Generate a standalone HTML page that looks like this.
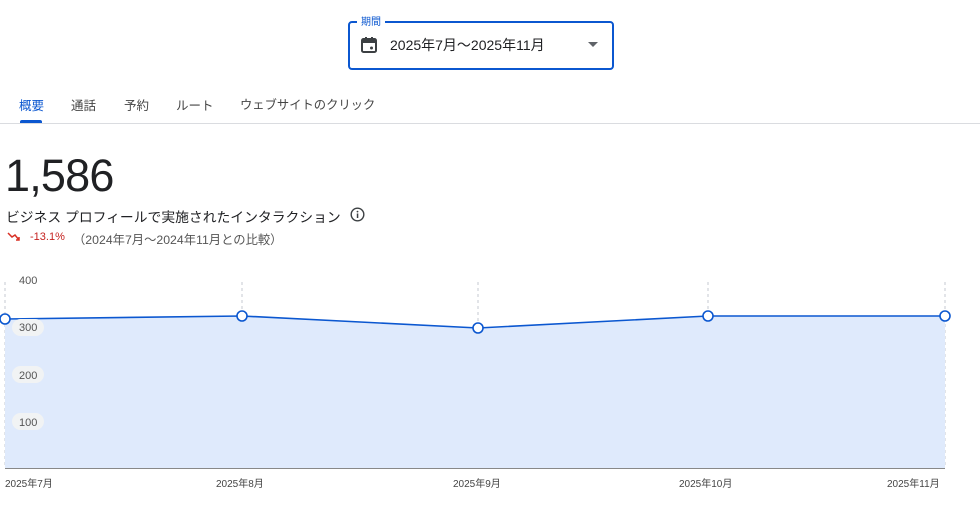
<!DOCTYPE html><html><head><meta charset="utf-8"><style>
body{margin:0;width:980px;height:507px;background:#fff;font-family:"Liberation Sans","Noto Sans CJK JP",sans-serif;color:#202124;position:relative;overflow:hidden}
.a{position:absolute;white-space:nowrap}
</style></head><body>
<div class="a" style="left:348px;top:21px;width:262px;height:45px;border:2px solid #0b57d0;border-radius:4px"></div>
<div class="a" style="left:357px;top:13px;background:#fff;padding:0 4px;font-size:10px;color:#0b57d0">期間</div>
<svg class="a" style="left:360px;top:36px" width="18" height="18" viewBox="0 0 18 18"><rect x="2" y="3" width="14" height="13" rx="1.5" fill="none" stroke="#3c4043" stroke-width="2"/><rect x="2" y="3" width="14" height="4" fill="#3c4043"/><rect x="5" y="1" width="2" height="3" fill="#3c4043"/><rect x="11" y="1" width="2" height="3" fill="#3c4043"/><circle cx="11.5" cy="12" r="1.5" fill="#3c4043"/></svg>
<div class="a" style="left:390px;top:35px;font-size:14px">2025年7月～2025年11月</div>
<svg class="a" style="left:588px;top:42px" width="10" height="5"><path d="M0 0L10 0L5 5Z" fill="#5f6368"/></svg>
<div class="a" style="left:19px;top:95px;font-size:12.5px;color:#0b57d0">概要</div>
<div class="a" style="left:20px;top:120px;width:22px;height:3px;background:#0b57d0;border-radius:2px 2px 0 0"></div>
<div class="a" style="left:71px;top:95px;font-size:12.5px;color:#444">通話</div>
<div class="a" style="left:124px;top:95px;font-size:12.5px;color:#444">予約</div>
<div class="a" style="left:176px;top:95px;font-size:12.5px;color:#444">ルート</div>
<div class="a" style="left:240px;top:95px;font-size:12.3px;color:#444">ウェブサイトのクリック</div>
<div class="a" style="left:0;top:123px;width:980px;height:1px;background:#dadce0"></div>
<div class="a" style="left:5px;top:150px;font-size:45px;letter-spacing:-0.8px">1,586</div>
<div class="a" style="left:6px;top:206px;font-size:13.8px">ビジネス プロフィールで実施されたインタラクション</div>
<svg class="a" style="left:350px;top:207px" width="15" height="15"><circle cx="7.5" cy="7.5" r="6.3" fill="none" stroke="#3c4043" stroke-width="1.4"/><rect x="6.8" y="6.5" width="1.5" height="4.5" fill="#3c4043"/><circle cx="7.5" cy="4.6" r="0.9" fill="#3c4043"/></svg>
<svg class="a" style="left:7px;top:232px" width="14" height="10"><path d="M1 1L5 5L8 3L12 8M9 8H12V5" fill="none" stroke="#d93025" stroke-width="1.5"/></svg>
<div class="a" style="left:30px;top:231px;font-size:11px;color:#c5221f">-13.1%</div>
<div class="a" style="left:73px;top:230px;font-size:12.3px;color:#555">（2024年7月～2024年11月との比較）</div>
<svg class="a" style="left:0;top:0" width="980" height="507">
<g stroke="#c6cad1" stroke-dasharray="3,3"><line x1="5" y1="282" x2="5" y2="468"/><line x1="242" y1="282" x2="242" y2="468"/><line x1="478" y1="282" x2="478" y2="468"/><line x1="708" y1="282" x2="708" y2="468"/><line x1="945" y1="282" x2="945" y2="468"/></g>
<path d="M5 319L242 316L478 328L708 316L945 316L945 468L5 468Z" fill="#dfeafc"/>
<line x1="5" y1="468.5" x2="945" y2="468.5" stroke="#888"/>
<path d="M5 319L242 316L478 328L708 316L945 316" fill="none" stroke="#0b57d0" stroke-width="1.6"/>
<g fill="#fff" stroke="#0b57d0" stroke-width="1.6"><circle cx="5" cy="319" r="5"/><circle cx="242" cy="316" r="5"/><circle cx="478" cy="328" r="5"/><circle cx="708" cy="316" r="5"/><circle cx="945" cy="316" r="5"/></g>
<g fill="#f1f3f4"><rect x="12" y="319" width="32" height="17" rx="8.5"/><rect x="12" y="366" width="32" height="17" rx="8.5"/><rect x="12" y="413" width="32" height="17" rx="8.5"/></g>
<g font-size="11" fill="#555" font-family="Liberation Sans,sans-serif"><text x="19" y="284">400</text><text x="19" y="331">300</text><text x="19" y="379">200</text><text x="19" y="426">100</text></g>
<g font-size="10" fill="#444" font-family="Liberation Sans,Noto Sans CJK JP,sans-serif"><text x="5" y="487">2025年7月</text><text x="216" y="487">2025年8月</text><text x="453" y="487">2025年9月</text><text x="679" y="487">2025年10月</text><text x="887" y="487">2025年11月</text></g>
</svg>
</body></html>
